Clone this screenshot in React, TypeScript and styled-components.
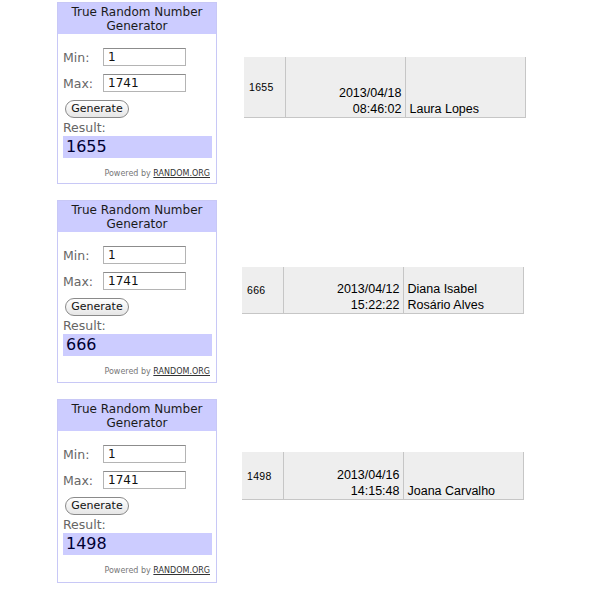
import React from "react";
import styled, { createGlobalStyle } from "styled-components";

const GlobalStyle = createGlobalStyle`
  body {
    margin: 0;
    background: #ffffff;
  }
`;

const Page = styled.div`
  display: flex;
  flex-direction: column;
  gap: 16px;
  padding: 2px 0 0 57px;
`;

const Section = styled.div<{ $gap: number }>`
  display: flex;
  align-items: flex-start;
  gap: ${(p) => p.$gap}px;
`;

const Widget = styled.div<{ $height: number }>`
  box-sizing: border-box;
  width: 160px;
  height: ${(p) => p.$height}px;
  border: 1px solid #c8c8f6;
  font-family: "DejaVu Sans", Verdana, sans-serif;
  display: flex;
  flex-direction: column;
`;

const Header = styled.div`
  height: 31px;
  background: #ccccff;
  color: #1a1a1a;
  font-size: 12px;
  line-height: 14px;
  text-align: center;
  padding-top: 2px;
  box-sizing: border-box;
`;

const Body = styled.div`
  display: flex;
  flex-direction: column;
  padding: 14px 4px 0 5px;
`;

const FieldRow = styled.div<{ $mt?: number }>`
  display: flex;
  align-items: center;
  height: 18px;
  margin-top: ${(p) => p.$mt ?? 0}px;
`;

const Label = styled.span`
  width: 40px;
  color: #666666;
  font-size: 12.5px;
`;

const Field = styled.div`
  box-sizing: border-box;
  width: 83px;
  height: 18px;
  border: 1px solid #b4b4b4;
  border-top-color: #8c8c8c;
  background: #ffffff;
  font-size: 12px;
  line-height: 16px;
  padding-left: 4px;
  color: #111111;
`;

const GenerateButton = styled.button`
  box-sizing: border-box;
  width: 64px;
  height: 18px;
  margin: 8px 0 0 2px;
  padding: 0;
  border: 1px solid #8a8a8a;
  border-radius: 9px;
  background: linear-gradient(#ffffff, #e6e6e6);
  font-family: "DejaVu Sans", Verdana, sans-serif;
  font-size: 11px;
  line-height: 16px;
  color: #111111;
`;

const ResultLabel = styled.div`
  margin-top: 3px;
  color: #666666;
  font-size: 12.5px;
  line-height: 14px;
`;

const ResultBox = styled.div`
  height: 22px;
  width: 149px;
  margin-top: 1px;
  background: #ccccff;
  color: #000033;
  font-size: 16px;
  line-height: 22px;
  padding-left: 3px;
  box-sizing: border-box;
`;

const Powered = styled.div`
  margin-top: 10px;
  padding-right: 2px;
  text-align: right;
  font-size: 8px;
  line-height: 12px;
  color: #777777;

  a {
    color: #333333;
    text-decoration: underline;
  }
`;

const Sheet = styled.table<{ $top: number; $height: number }>`
  margin-top: ${(p) => p.$top}px;
  height: ${(p) => p.$height}px;
  border-collapse: collapse;
  background: #eeeeee;
  font-family: "Liberation Sans", Arial, sans-serif;
  color: #000000;
`;

const Cell = styled.td<{ $width: number; $align: "left" | "right" }>`
  box-sizing: border-box;
  width: ${(p) => p.$width}px;
  padding: 0 3px 0 4px;
  border-right: 1px solid #c6c6c6;
  border-bottom: 1px solid #c6c6c6;
  font-size: 12.5px;
  line-height: 16px;
  text-align: ${(p) => p.$align};
  vertical-align: bottom;
`;

const IdCell = styled.td`
  box-sizing: border-box;
  width: 41px;
  padding: 0 0 0 5px;
  border-right: 1px solid #c6c6c6;
  border-bottom: 1px solid #c6c6c6;
  font-size: 10.5px;
  letter-spacing: 0.3px;
  vertical-align: middle;
`;

type Draw = {
  result: string;
  date: string;
  time: string;
  name: string[];
  widgetHeight: number;
  gap: number;
  tableTop: number;
  tableHeight: number;
};

const draws: Draw[] = [
  {
    result: "1655",
    date: "2013/04/18",
    time: "08:46:02",
    name: ["Laura Lopes"],
    widgetHeight: 182,
    gap: 27,
    tableTop: 55,
    tableHeight: 61,
  },
  {
    result: "666",
    date: "2013/04/12",
    time: "15:22:22",
    name: ["Diana Isabel", "Rosário Alves"],
    widgetHeight: 183,
    gap: 25,
    tableTop: 67,
    tableHeight: 47,
  },
  {
    result: "1498",
    date: "2013/04/16",
    time: "14:15:48",
    name: ["Joana Carvalho"],
    widgetHeight: 184,
    gap: 25,
    tableTop: 53,
    tableHeight: 48,
  },
];

const App = () => {
  return (
    <Page>
      <GlobalStyle />
      {draws.map((d) => (
        <Section key={d.result} $gap={d.gap}>
          <Widget $height={d.widgetHeight}>
            <Header>
              True Random Number
              <br />
              Generator
            </Header>
            <Body>
              <FieldRow>
                <Label>Min:</Label>
                <Field>1</Field>
              </FieldRow>
              <FieldRow $mt={8}>
                <Label>Max:</Label>
                <Field>1741</Field>
              </FieldRow>
              <div>
                <GenerateButton>Generate</GenerateButton>
              </div>
              <ResultLabel>Result:</ResultLabel>
              <ResultBox>{d.result}</ResultBox>
              <Powered>
                Powered by <a>RANDOM.ORG</a>
              </Powered>
            </Body>
          </Widget>
          <Sheet $top={d.tableTop} $height={d.tableHeight}>
            <tbody>
              <tr>
                <IdCell>{d.result}</IdCell>
                <Cell $width={120} $align="right">
                  {d.date}
                  <br />
                  {d.time}
                </Cell>
                <Cell $width={120} $align="left">
                  {d.name.map((n, i) => (
                    <React.Fragment key={n}>
                      {i > 0 && <br />}
                      {n}
                    </React.Fragment>
                  ))}
                </Cell>
              </tr>
            </tbody>
          </Sheet>
        </Section>
      ))}
    </Page>
  );
};

export default App;
